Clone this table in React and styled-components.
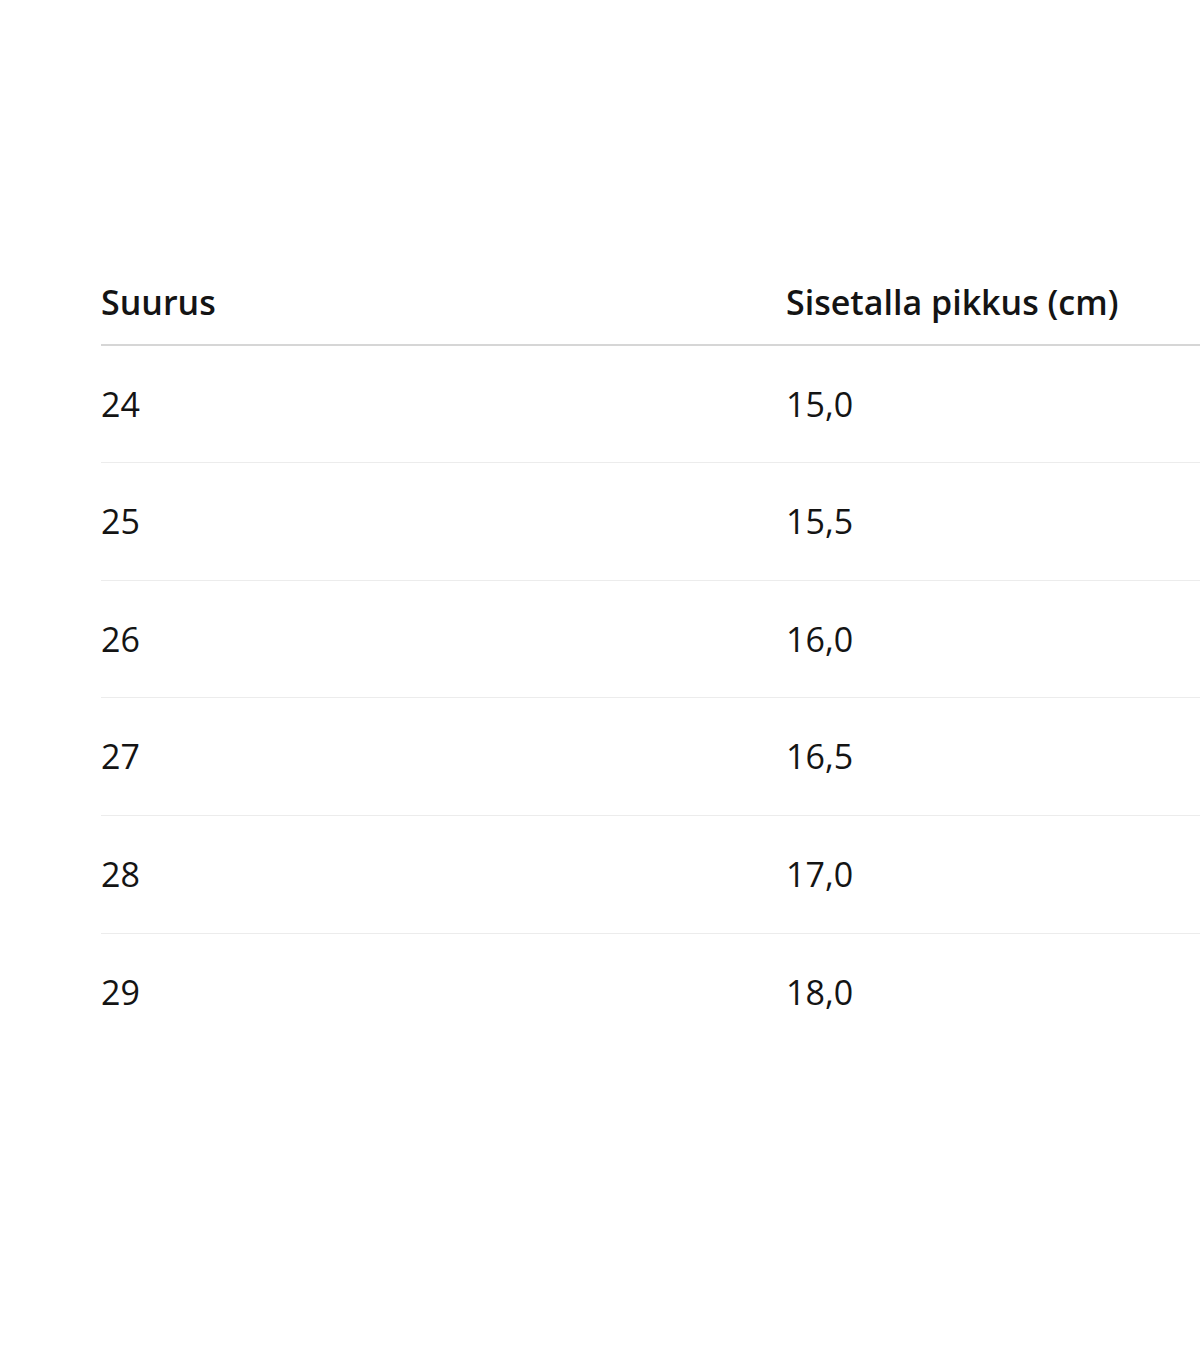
import React from "react";
import styled, { createGlobalStyle } from "styled-components";

const Global = createGlobalStyle`
  html, body { margin: 0; padding: 0; background: #ffffff; }
  body { font-family: "Open Sans", "Noto Sans", Arial, sans-serif; color: #141414; }
`;

const Page = styled.div`
  min-height: 1372px;
  padding: 260px 0 0 101px;
  box-sizing: border-box;
  overflow: hidden;
`;

const Table = styled.table`
  width: 1099px;
  border-collapse: collapse;
  table-layout: fixed;
`;

const Col = styled.col`
  width: ${(p) => p.$w};
`;

const HeadCell = styled.th`
  text-align: left;
  font-weight: 600;
  font-size: 34px;
  line-height: 50.6px;
  padding: 17px 0 16px 0;
  border-bottom: 2px solid #d6d6d6;
  white-space: nowrap;
`;

const Row = styled.tr`
  border-bottom: ${(p) => (p.$last ? "none" : "1px solid #ececec")};
`;

const Cell = styled.td`
  font-size: 34px;
  line-height: 50.6px;
  font-weight: 400;
  padding: 33px 0;
  white-space: nowrap;
`;

const rows = [
  ["24", "15,0"],
  ["25", "15,5"],
  ["26", "16,0"],
  ["27", "16,5"],
  ["28", "17,0"],
  ["29", "18,0"],
];

export default function App() {
  return (
    <>
      <Global />
      <Page>
        <Table>
          <colgroup>
            <Col $w="685px" />
            <Col $w="auto" />
          </colgroup>
          <thead>
            <tr>
              <HeadCell>Suurus</HeadCell>
              <HeadCell>Sisetalla pikkus (cm)</HeadCell>
            </tr>
          </thead>
          <tbody>
            {rows.map((r, i) => (
              <Row key={r[0]} $last={i === rows.length - 1}>
                <Cell>{r[0]}</Cell>
                <Cell>{r[1]}</Cell>
              </Row>
            ))}
          </tbody>
        </Table>
      </Page>
    </>
  );
}
